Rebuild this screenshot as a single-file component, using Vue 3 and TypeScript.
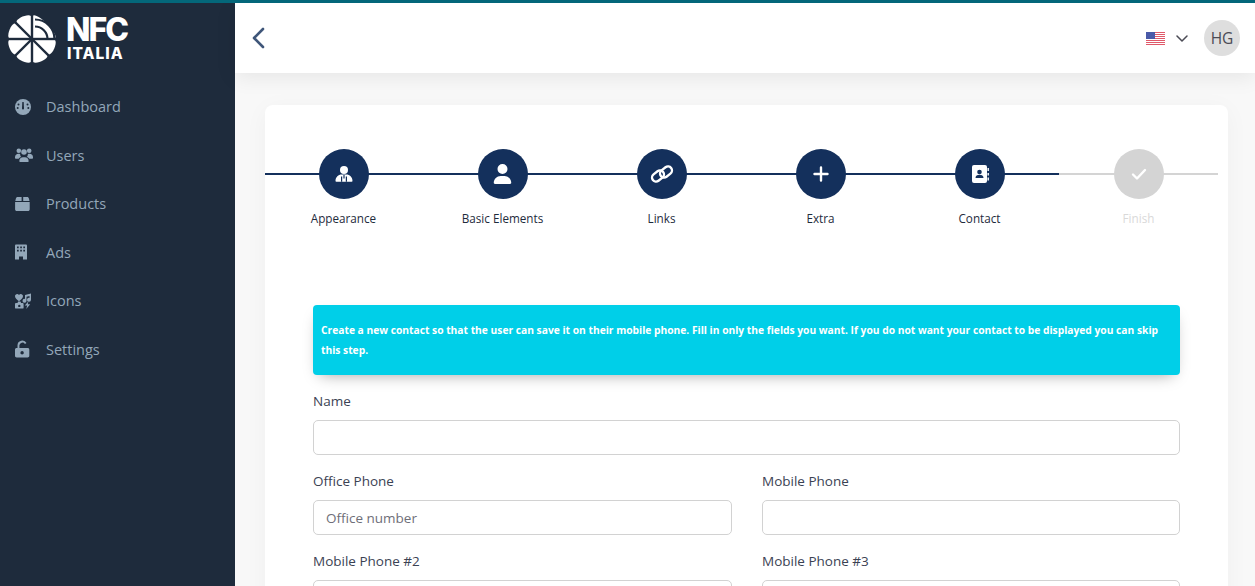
<script setup lang="ts">
const menu = [
  { label: 'Dashboard', icon: 'gauge' },
  { label: 'Users', icon: 'users' },
  { label: 'Products', icon: 'box' },
  { label: 'Ads', icon: 'building' },
  { label: 'Icons', icon: 'icons' },
  { label: 'Settings', icon: 'lock' },
]

const steps = [
  { label: 'Appearance', icon: 'tie', done: true },
  { label: 'Basic Elements', icon: 'user', done: true },
  { label: 'Links', icon: 'link', done: true },
  { label: 'Extra', icon: 'plus', done: true },
  { label: 'Contact', icon: 'book', done: true },
  { label: 'Finish', icon: 'check', done: false },
]

// logo wedges, angles in degrees clockwise from north
const at = (deg: number, r: number) => {
  const a = (deg * Math.PI) / 180
  return `${(26 + r * Math.sin(a)).toFixed(2)} ${(26 - r * Math.cos(a)).toFixed(2)}`
}
const wedge = (from: number, to: number, bulge: number) =>
  `M26 26L${at(from, 21)}C${at(from, bulge)} ${at(to, bulge)} ${at(to, 21)}Z`
const petals = [
  wedge(0, 90, 33),
  wedge(90, 135, 28),
  wedge(135, 180, 28),
  wedge(180, 225, 28),
  wedge(225, 270, 28),
  wedge(270, 315, 28),
  wedge(315, 360, 28),
]
const cuts = [0, 90, 135, 180, 225, 270, 315].map((deg) => at(deg, 30))
</script>

<template>
  <div class="app">
    <aside class="sidebar">
      <div class="brand">
        <svg class="brand__mark" viewBox="0 0 52 52">
          <path v-for="d in petals" :key="d" :d="d" fill="#fff" />
          <g stroke="#1e2b3c" stroke-width="2.4">
            <path v-for="c in cuts" :key="c" :d="`M26 26L${c}`" />
          </g>
          <g fill="none" stroke="#1e2b3c" stroke-width="2.2">
            <path d="M29 6.500a19.500 19.500 0 0 1 19.500 19.500" />
            <path d="M29 13.500a12.500 12.500 0 0 1 12.500 12.500" />
          </g>
        </svg>
        <div class="brand__text">
          <span class="brand__nfc">NFC</span>
          <span class="brand__sub">ITALIA</span>
        </div>
      </div>
      <nav class="menu">
        <a v-for="item in menu" :key="item.label" class="menu__item">
          <svg class="menu__icon" viewBox="0 0 18 18" fill="#93a7b9">
            <template v-if="item.icon === 'gauge'">
              <circle cx="8" cy="9" r="8" />
              <g fill="#1e2b3c">
                <path d="M7.300 4h1.400l.3 6.500a1 1 0 1 1-2 0z" />
                <circle cx="3.500" cy="6.500" r="1" />
                <circle cx="12.500" cy="6.500" r="1" />
                <circle cx="2.700" cy="10" r="1" />
                <circle cx="13.300" cy="10" r="1" />
              </g>
            </template>
            <template v-else-if="item.icon === 'users'">
              <circle cx="3.800" cy="4.800" r="2.300" />
              <circle cx="14.200" cy="4.800" r="2.300" />
              <circle cx="9" cy="6" r="2.800" />
              <path d="M0 11.300C0 9 1.500 7.800 3.500 7.800c.7 0 1.300.1 1.700.4-.1 1.300.4 2 1 2.700-1.300.4-2.100 1.100-2.500 1.800H.8c-.5 0-.8-.3-.8-.7zM18 11.300C18 9 16.500 7.800 14.500 7.800c-.7 0-1.300.1-1.700.4.1 1.300-.4 2-1 2.700 1.300.4 2.100 1.100 2.500 1.800h2.900c.5 0 .8-.3.800-.7zM4.300 15.200c0-2.400 1.700-3.900 3.700-3.900h2c2 0 3.700 1.500 3.700 3.900 0 .5-.3.800-.8.800H5.100c-.5 0-.8-.3-.8-.8z" />
            </template>
            <template v-else-if="item.icon === 'box'">
              <path d="M2.600 2h4v4H0.300l.6-2.400C1.100 2.600 1.700 2 2.600 2zM8.200 2h4c.9 0 1.500.6 1.700 1.600l.6 2.400H8.200zM.1 7h14.600v7.200c0 1-.7 1.800-1.700 1.800H1.800C.8 16 .1 15.200.1 14.200z" />
            </template>
            <template v-else-if="item.icon === 'building'">
              <path d="M1.200 1.500h9.600c.7 0 1.200.5 1.200 1.200V16.500H8v-3H4v3H0V2.700c0-.7.500-1.200 1.200-1.200zM2 3.500V5.200h1.700V3.500zm3.200 0V5.200h1.700V3.500zm3.100 0V5.200H10V3.500zM2 6.800V8.500h1.700V6.800zm3.200 0V8.500h1.700V6.800zm3.100 0V8.500H10V6.800z" fill-rule="evenodd" />
            </template>
            <template v-else-if="item.icon === 'icons'">
              <path d="M0 4.200C0 2 2.800 1 4 3 5.200 1 8 2 8 4.200c0 2-2.400 3.800-4 5.100C2.400 8 0 6.200 0 4.200z" />
              <path d="M16 1.500v6.300a2 2 0 1 1-1.500-1.900V4l-3 .7v4.100a2 2 0 1 1-1.500-1.900V2.900z" />
              <path d="M.9 11h1.600l.6-1.400h2.400l.6 1.400h1.600c.5 0 .9.400.9.900v3.800c0 .5-.4.900-.9.900H.9c-.5 0-.9-.4-.9-.9v-3.800c0-.5.400-.9.900-.9zm3.400 1.700a1.200 1.200 0 1 0 0 2.400 1.200 1.200 0 0 0 0-2.400z" fill-rule="evenodd" />
              <path d="M13.300 9.500 9.800 13.500h2.400l-1 3.500 4-4.700h-2.400z" />
            </template>
            <template v-else>
              <path d="M2.500 8V5.300a4.800 4.800 0 0 1 9-2.300L9.900 4a3 3 0 0 0-5.500 1.300V8h8.200c1 0 1.700.7 1.700 1.700v6c0 1-.7 1.700-1.700 1.700H1.700C.7 17.400 0 16.700 0 15.700v-6C0 8.700.7 8 1.700 8zM7.100 11a1.700 1.700 0 0 0-1.700 1.700c0 .9.700 1.700 1.700 1.700s1.700-.8 1.700-1.700A1.700 1.700 0 0 0 7.100 11z" fill-rule="evenodd" />
            </template>
          </svg>
          <span>{{ item.label }}</span>
        </a>
      </nav>
    </aside>

    <div class="main">
      <header class="topbar">
        <svg class="back" viewBox="0 0 14 22" fill="none" stroke="#3f5679" stroke-width="2.600" stroke-linecap="round" stroke-linejoin="round">
          <path d="M12 2 3 11l9 9" />
        </svg>
        <div class="topbar__right">
          <svg class="flag" viewBox="0 0 19 13">
            <rect width="19" height="13" fill="#fff" />
            <path d="M0 0h19v1H0zM0 2h19v1H0zM0 4h19v1H0zM0 6h19v1H0zM0 8h19v1H0zM0 10h19v1H0zM0 12h19v1H0z" fill="#e0596a" />
            <rect width="9" height="7" fill="#4a5aa8" />
          </svg>
          <svg class="chev" viewBox="0 0 12 7" fill="none" stroke="#4b4b55" stroke-width="1.500" stroke-linecap="round" stroke-linejoin="round">
            <path d="m1 1 5 5 5-5" />
          </svg>
          <div class="avatar">HG</div>
        </div>
      </header>

      <section class="card">
        <ol class="steps">
          <li v-for="step in steps" :key="step.label" class="step" :class="{ 'step--off': !step.done }">
            <div class="step__dot">
              <svg v-if="step.icon === 'tie'" viewBox="0 0 18 18" width="18" height="18" fill="#fff">
                <circle cx="9" cy="5" r="4" />
                <path d="M.5 16c0-4 3-6.500 6-6.500h5c3 0 6 2.500 6 6.500 0 .5-.3.8-.8.8H1.300c-.5 0-.8-.3-.8-.8z" />
                <path d="M6 11.500h1.200v5.300H6zM10.800 11.500H12v5.300h-1.200zM8.400 10h1.200v3.500H8.400z" fill="#14305c" />
              </svg>
              <svg v-else-if="step.icon === 'user'" viewBox="0 0 448 512" width="19" height="20" fill="#fff">
                <path d="M224 256A128 128 0 1 0 224 0a128 128 0 1 0 0 256zm-45.700 48C79.800 304 0 383.800 0 482.300 0 498.700 13.300 512 29.700 512h388.600c16.400 0 29.700-13.300 29.700-29.700C448 383.800 368.200 304 269.700 304z" />
              </svg>
              <svg v-else-if="step.icon === 'link'" viewBox="0 0 24 24" width="24" height="24" fill="none" stroke="#fff" stroke-width="2.400">
                <rect x="1.500" y="10" width="13" height="8" rx="4" transform="rotate(-38 8 14)" />
                <rect x="9.500" y="6" width="13" height="8" rx="4" transform="rotate(-38 16 10)" />
              </svg>
              <svg v-else-if="step.icon === 'plus'" viewBox="0 0 16 16" width="16" height="16" fill="none" stroke="#fff" stroke-width="2.400" stroke-linecap="round">
                <path d="M8 1.500v13M1.500 8h13" />
              </svg>
              <svg v-else-if="step.icon === 'book'" viewBox="0 0 20 20" width="20" height="20">
                <rect x="2" y="1" width="15" height="18" rx="2" fill="#fff" />
                <circle cx="9.500" cy="8" r="2.300" fill="#14305c" />
                <path d="M5.500 14c0-2.300 1.700-3.300 4-3.300s4 1 4 3.300z" fill="#14305c" />
                <path d="M18.200 4v3M18.200 9v2.500M18.200 13.500v3" stroke="#fff" stroke-width="1.400" />
              </svg>
              <svg v-else viewBox="0 0 16 16" width="16" height="16" fill="none" stroke="#fff" stroke-width="2.400" stroke-linecap="round" stroke-linejoin="round">
                <path d="m2 8.500 4 4 8-8.500" />
              </svg>
            </div>
            <span class="step__label">{{ step.label }}</span>
          </li>
        </ol>

        <div class="form">
          <div class="notice">
            Create a new contact so that the user can save it on their mobile phone. Fill in only the fields you want. If you do not want your contact to be displayed you can skip this step.
          </div>
          <div class="field">
            <label>Name</label>
            <input type="text" />
          </div>
          <div class="form__row">
            <div class="field">
              <label>Office Phone</label>
              <input type="text" placeholder="Office number" />
            </div>
            <div class="field">
              <label>Mobile Phone</label>
              <input type="text" />
            </div>
          </div>
          <div class="form__row">
            <div class="field">
              <label>Mobile Phone #2</label>
              <input type="text" />
            </div>
            <div class="field">
              <label>Mobile Phone #3</label>
              <input type="text" />
            </div>
          </div>
        </div>
      </section>
    </div>
  </div>
</template>

<style>
html,
body {
  margin: 0;
  height: 100%;
  overflow: hidden;
}
</style>

<style scoped>
.app {
  display: flex;
  height: 586px;
  overflow: hidden;
  border-top: 3px solid #04677a;
  box-sizing: border-box;
  background: #f8f8f8;
  font-family: 'Open Sans', 'Noto Sans', sans-serif;
  color: #3b4253;
}

.sidebar {
  width: 235px;
  flex-shrink: 0;
  background: #1e2b3c;
}

.brand {
  display: flex;
  align-items: center;
  gap: 8px;
  height: 70px;
  padding: 2px 0 0 6px;
  box-sizing: border-box;
}

.brand__mark {
  width: 52px;
  height: 52px;
}

.brand__text {
  display: flex;
  flex-direction: column;
  gap: 4px;
  color: #fff;
  font-family: Inter, 'Liberation Sans', sans-serif;
  font-weight: 800;
  margin-top: -2px;
}

.brand__nfc {
  font-size: 32px;
  line-height: 26px;
  letter-spacing: -2px;
}

.brand__sub {
  font-size: 15.500px;
  line-height: 13px;
  letter-spacing: 1px;
  margin-left: 1px;
}

.menu {
  display: flex;
  flex-direction: column;
  padding-top: 9.500px;
}

.menu__item {
  display: flex;
  align-items: center;
  gap: 13px;
  height: 48.500px;
  padding-left: 15px;
  color: #93a7b9;
  font-size: 14.500px;
}

.menu__icon {
  width: 18px;
  height: 18px;
}

.main {
  flex: 1;
  min-width: 0;
}

.topbar {
  display: flex;
  align-items: center;
  justify-content: space-between;
  height: 70px;
  padding: 0 15px 0 16px;
  background: #fff;
  box-shadow: 0 4px 20px rgba(0, 0, 0, 0.08);
}

.back {
  width: 14px;
  height: 22px;
}

.topbar__right {
  display: flex;
  align-items: center;
}

.flag {
  width: 19px;
  height: 13px;
}

.chev {
  width: 12px;
  height: 7px;
  margin: 0 16px 0 11px;
}

.avatar {
  display: flex;
  align-items: center;
  justify-content: center;
  width: 36px;
  height: 36px;
  border-radius: 50%;
  background: #dedede;
  color: #4b4b55;
  font-size: 15.500px;
}

.card {
  margin: 32px 27px 0 30px;
  padding: 44px 9px 0 0;
  background: #fff;
  border-radius: 8px;
  box-shadow: 0 4px 24px rgba(0, 0, 0, 0.04);
  overflow: hidden;
}

.steps {
  display: grid;
  grid-template-columns: repeat(6, 159px);
  margin: 0 0 0 -1px;
  padding: 0;
  list-style: none;
}

.step {
  position: relative;
  display: flex;
  flex-direction: column;
  align-items: center;
  gap: 10px;
}

.step::before {
  content: '';
  position: absolute;
  top: 24px;
  left: 0;
  right: 0;
  height: 2px;
  background: #14305c;
}

.step__dot {
  position: relative;
  display: flex;
  align-items: center;
  justify-content: center;
  width: 50px;
  height: 50px;
  border-radius: 50%;
  background: #14305c;
}

.step__label {
  font-size: 11.700px;
  line-height: 18px;
  color: #1e2b3c;
}

.step--off::before,
.step--off .step__dot {
  background: #d4d4d4;
}

.step--off .step__label {
  color: #d9d9d9;
}

.form {
  display: flex;
  flex-direction: column;
  gap: 18px;
  margin: 78px 39px 0 48px;
  padding-bottom: 20px;
}

.notice {
  padding: 15px 3px 15px 8px;
  background: #00cfe8;
  border-radius: 4px;
  box-shadow: 0 6px 15px -7px rgba(0, 0, 0, 0.4);
  color: #fff;
  font-size: 10.250px;
  font-weight: 700;
  line-height: 20px;
}

.form__row {
  display: grid;
  grid-template-columns: 419px 418px;
  gap: 30px;
}

.field {
  display: flex;
  flex-direction: column;
  gap: 11px;
}

.field label {
  font-size: 13.500px;
  line-height: 16px;
  color: #3b4253;
}

.field input {
  box-sizing: border-box;
  width: 100%;
  height: 35px;
  padding: 0 12px;
  background: #fff;
  border: 1px solid #d2d2d2;
  border-radius: 5px;
  font: inherit;
  font-size: 13.500px;
}

.field input::placeholder {
  color: #6e6e78;
  opacity: 1;
}
</style>
